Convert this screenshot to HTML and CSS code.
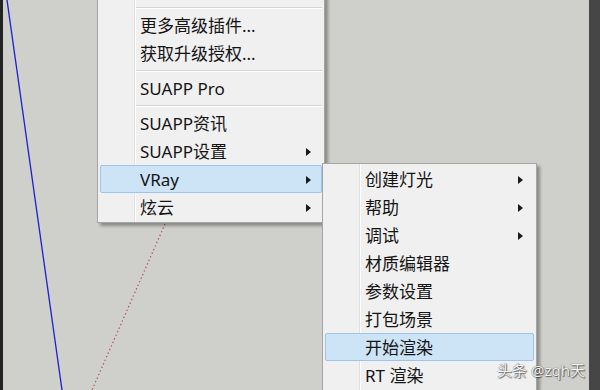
FILE: index.html
```html
<!DOCTYPE html>
<html lang="zh-CN">
<head>
<meta charset="utf-8">
<title>SUAPP VRay 菜单</title>
<link rel="stylesheet" href="styles.css">
</head>
<body>
<div class="screen">
  <div class="edge-left"></div>
  <div class="viewport">
    <svg class="guides" width="586" height="390" viewBox="0 0 586 390">
      <line x1="4" y1="0" x2="59" y2="390" stroke="#1e1ed2" stroke-width="1.3"/>
      <line x1="162" y1="224" x2="89" y2="390" stroke="#b04a4a" stroke-width="1.2" stroke-dasharray="1.3 2.6"/>
    </svg>

    <div class="menu menu-main">
      <div class="item"></div>
      <div class="sep"></div>
      <div class="item"><span class="label">更多高级插件...</span></div>
      <div class="item"><span class="label">获取升级授权...</span></div>
      <div class="sep"></div>
      <div class="item"><span class="label">SUAPP Pro</span></div>
      <div class="sep"></div>
      <div class="item"><span class="label">SUAPP资讯</span></div>
      <div class="item"><span class="label">SUAPP设置</span><span class="arrow"></span></div>
      <div class="item hl"><span class="label">VRay</span><span class="arrow"></span></div>
      <div class="item"><span class="label">炫云</span><span class="arrow"></span></div>
    </div>

    <div class="menu menu-sub">
      <div class="item"><span class="label">创建灯光</span><span class="arrow"></span></div>
      <div class="item"><span class="label">帮助</span><span class="arrow"></span></div>
      <div class="item"><span class="label">调试</span><span class="arrow"></span></div>
      <div class="item"><span class="label">材质编辑器</span></div>
      <div class="item"><span class="label">参数设置</span></div>
      <div class="item"><span class="label">打包场景</span></div>
      <div class="item hl"><span class="label">开始渲染</span></div>
      <div class="item"><span class="label">RT 渲染</span></div>
    </div>

    <div class="watermark">头条 @zqh天</div>
  </div>
  <div class="edge-right"></div>
</div>
</body>
</html>
```

FILE: styles.css
```css
html, body {
  margin: 0;
  padding: 0;
}

body {
  width: 600px;
  height: 390px;
  overflow: hidden;
  background: #cfcfcb;
}

.screen {
  display: flex;
  width: 600px;
  height: 390px;
}

.edge-left {
  width: 3px;
  background: #232323;
}

.edge-right {
  width: 11px;
  background: #464646;
}

.viewport {
  position: relative;
  flex: 1;
  background: #cfcfcb;
  overflow: hidden;
}

.guides {
  position: absolute;
  left: 0;
  top: 0;
}

.menu {
  position: absolute;
  box-sizing: border-box;
  background-color: #f0f0f0;
  background-image: linear-gradient(to right,
    transparent 36px, #e0e0e0 36px, #e0e0e0 37px,
    #ffffff 37px, #ffffff 38px, transparent 38px);
  border: 1px solid #a4a4a4;
  padding: 1px 2px;
  box-shadow: 3px 3px 3px rgba(0, 0, 0, 0.33);
  font-family: "Noto Sans", "Noto Sans CJK SC", sans-serif;
  font-size: 17px;
  line-height: 1;
  color: #141414;
}

.menu-main {
  left: 94px;
  top: -26px;
  width: 228px;
}

.menu-sub {
  left: 319px;
  top: 163px;
  width: 215px;
}

.item {
  display: flex;
  align-items: center;
  box-sizing: border-box;
  height: 28px;
  padding: 1px 0 0 39px;
  border: 1px solid transparent;
  border-radius: 2px;
}

.item.hl {
  background: #cde3f6;
  border-color: #9ec4eb;
}

.label {
  flex: 1;
  white-space: nowrap;
}

.arrow {
  width: 0;
  height: 0;
  border-left: 5px solid #1a1a1a;
  border-top: 4.5px solid transparent;
  border-bottom: 4.5px solid transparent;
  margin-right: 10px;
}

.sep {
  height: 1px;
  margin: 3px 0 2px 36px;
  background: #d5d5d5;
  border-bottom: 1px solid #ffffff;
}

.watermark {
  position: absolute;
  left: 494px;
  top: 363px;
  font-family: "Noto Sans", "Noto Sans CJK SC", sans-serif;
  font-size: 15px;
  line-height: 1;
  color: #f4f4f4;
  white-space: nowrap;
  text-shadow: 0 0 1px rgba(0, 0, 0, 0.8), 1px 1px 1px rgba(0, 0, 0, 0.5);
}
```
